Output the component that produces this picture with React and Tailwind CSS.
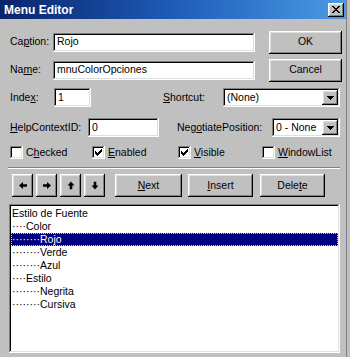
import React from "react";

const raised =
  "shadow-[inset_-1px_-1px_0_#000000,inset_1px_1px_0_#ffffff,inset_-2px_-2px_0_#808080,inset_2px_2px_0_#dfdfdf]";
const sunken =
  "shadow-[inset_-1px_-1px_0_#ffffff,inset_1px_1px_0_#808080,inset_-2px_-2px_0_#dfdfdf,inset_2px_2px_0_#000000]";

function Btn({ w, h, children }) {
  return (
    <div
      className={`${raised} bg-[#c0c0c0] flex items-center justify-center shrink-0 ${w} ${h}`}
    >
      {children}
    </div>
  );
}

function Field({ w, text }) {
  return (
    <div className={`${sunken} bg-white h-[19px] shrink-0 flex items-center pl-[4px] ${w}`}>
      {text}
    </div>
  );
}

function Combo({ w, text }) {
  return (
    <div className={`${sunken} bg-white h-[19px] shrink-0 flex items-center pl-[4px] pr-[2px] ${w}`}>
      <span className="flex-1">{text}</span>
      <div className={`${raised} bg-[#c0c0c0] w-[16px] h-[15px] flex items-center justify-center`}>
        <svg width="7" height="4" viewBox="0 0 7 4" shapeRendering="crispEdges">
          <path d="M0 0h7v1h-1v1h-1v1h-1v1h-1v-1h-1v-1h-1v-1h-1z" fill="#000" />
        </svg>
      </div>
    </div>
  );
}

function Check({ checked, children, w }) {
  return (
    <div className={`flex items-center h-[13px] shrink-0 ${w}`}>
      <div className={`${sunken} bg-white w-[13px] h-[13px] flex items-center justify-center`}>
        {checked && (
          <svg width="7" height="7" viewBox="0 0 7 7" shapeRendering="crispEdges">
            <path
              d="M0 2h1v3h-1z M1 3h1v3h-1z M2 4h1v3h-1z M3 3h1v3h-1z M4 2h1v3h-1z M5 1h1v3h-1z M6 0h1v3h-1z"
              fill="#000"
            />
          </svg>
        )}
      </div>
      <span className="ml-[3px]">{children}</span>
    </div>
  );
}

function Arrow({ rot }) {
  return (
    <svg width="8" height="7" viewBox="0 0 8 7" className={rot}>
      <path d="M0 3.5 L4 0 L4 2.2 L8 2.2 L8 4.8 L4 4.8 L4 7 Z" fill="#000" />
    </svg>
  );
}

const items = [
  { t: "Estilo de Fuente", d: 0 },
  { t: "Color", d: 1 },
  { t: "Rojo", d: 2, sel: true },
  { t: "Verde", d: 2 },
  { t: "Azul", d: 2 },
  { t: "Estilo", d: 1 },
  { t: "Negrita", d: 2 },
  { t: "Cursiva", d: 2 },
];

export default function App() {
  return (
    <div
      className="w-[350px] h-[357px] bg-[#c0c0c0] overflow-hidden text-[10.5px] text-black"
      style={{ fontFamily: '"Liberation Sans", Arial, sans-serif' }}
    >
      <div className="w-[347px] h-full border-r border-[#808080] flex flex-col">
        {/* title bar */}
        <div className="h-[19px] shrink-0 bg-linear-to-r from-[#0a246a] via-[#1e5cb8] to-[#4c9ae4] flex items-center justify-between">
          <span className="pl-[4px] text-white font-bold text-[12px] leading-none">Menu Editor</span>
          <div className={`${raised} bg-[#c0c0c0] w-[16px] h-[14px] mr-[2px] flex items-center justify-center`}>
            <svg width="8" height="7" viewBox="0 0 8 7" shapeRendering="crispEdges">
              <path
                d="M0 0h2v1h1v1h2v-1h1v-1h2v1h-1v1h-1v1h-1v1h1v1h1v1h1v1h-2v-1h-1v-1h-2v1h-1v1h-2v-1h1v-1h1v-1h1v-1h-1v-1h-1v-1h-1z"
                fill="#000"
              />
            </svg>
          </div>
        </div>

        <div className="pl-[10px] flex flex-col">
          {/* Caption row */}
          <div className="flex items-center h-[24px] mt-[11px]">
            <span className="w-[43px] shrink-0">
              Ca<u className="underline-offset-1">p</u>tion:
            </span>
            <Field w="w-[202px]" text="Rojo" />
            <div className="ml-[14px]">
              <Btn w="w-[73px]" h="h-[23px]">OK</Btn>
            </div>
          </div>

          {/* Name row */}
          <div className="flex items-center h-[24px] mt-[4px]">
            <span className="w-[43px] shrink-0">
              Na<u className="underline-offset-1">m</u>e:
            </span>
            <Field w="w-[202px]" text="mnuColorOpciones" />
            <div className="ml-[14px]">
              <Btn w="w-[73px]" h="h-[23px]">Cancel</Btn>
            </div>
          </div>

          {/* Index / Shortcut */}
          <div className="flex items-center h-[19px] mt-[6px]">
            <span className="w-[44px] shrink-0">
              Inde<u className="underline-offset-1">x</u>:
            </span>
            <Field w="w-[37px]" text="1" />
            <span className="ml-[72px] w-[60px] shrink-0">
              <u className="underline-offset-1">S</u>hortcut:
            </span>
            <Combo w="w-[117px]" text="(None)" />
          </div>

          {/* HelpContextID / NegotiatePosition */}
          <div className="flex items-center h-[19px] mt-[11px]">
            <span className="w-[78px] shrink-0">
              <u className="underline-offset-1">H</u>elpContextID:
            </span>
            <Field w="w-[71px]" text="0" />
            <span className="ml-[18px] w-[95px] shrink-0">
              Neg<u className="underline-offset-1">o</u>tiatePosition:
            </span>
            <Combo w="w-[68px]" text="0 - None" />
          </div>

          {/* Checkboxes */}
          <div className="flex items-center h-[13px] mt-[9px]">
            <Check w="w-[82px]">
              C<u className="underline-offset-1">h</u>ecked
            </Check>
            <Check w="w-[86px]" checked>
              <u className="underline-offset-1">E</u>nabled
            </Check>
            <Check w="w-[84px]" checked>
              <u className="underline-offset-1">V</u>isible
            </Check>
            <Check w="w-[80px]">
              <u className="underline-offset-1">W</u>indowList
            </Check>
          </div>

          {/* separator */}
          <div className="ml-[-2px] mt-[8px] w-[332px] h-[2px] border-t border-[#808080] border-b border-b-white" />

          {/* buttons row */}
          <div className="flex items-center h-[23px] mt-[5px]">
            <div className="ml-[2px] flex gap-[3px]">
              <Btn w="w-[21px]" h="h-[23px]"><Arrow rot="" /></Btn>
              <Btn w="w-[21px]" h="h-[23px]"><Arrow rot="rotate-180" /></Btn>
              <Btn w="w-[21px]" h="h-[23px]"><Arrow rot="rotate-90" /></Btn>
              <Btn w="w-[21px]" h="h-[23px]"><Arrow rot="-rotate-90" /></Btn>
            </div>
            <div className="ml-[10px]">
              <Btn w="w-[67px]" h="h-[23px]">
                <span>
                  <u className="underline-offset-1">N</u>ext
                </span>
              </Btn>
            </div>
            <div className="ml-[6px]">
              <Btn w="w-[65px]" h="h-[23px]">
                <span>
                  <u className="underline-offset-1">I</u>nsert
                </span>
              </Btn>
            </div>
            <div className="ml-[7px]">
              <Btn w="w-[65px]" h="h-[23px]">
                <span>
                  Dele<u className="underline-offset-1">t</u>e
                </span>
              </Btn>
            </div>
          </div>

          {/* list */}
          <div className={`${sunken} bg-white ml-[-1px] mt-[7px] w-[331px] h-[149px] p-[2px]`}>
            <div className="pt-[1px] flex flex-col">
              {items.map((it, i) => (
                <div
                  key={i}
                  className={
                    it.sel
                      ? "h-[13px] leading-[11px] bg-[#000080] text-white border border-dotted border-[#d8d880] whitespace-pre"
                      : "h-[13px] leading-[13px] px-[1px] whitespace-pre"
                  }
                >
                  {"····".repeat(it.d)}
                  {it.t}
                </div>
              ))}
            </div>
          </div>
        </div>
      </div>
    </div>
  );
}
